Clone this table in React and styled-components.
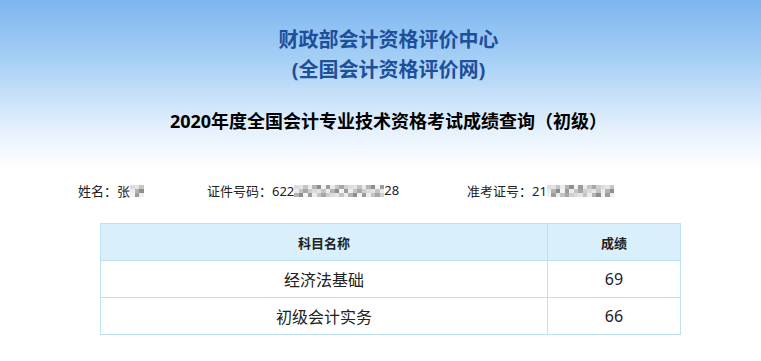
import React from "react";
import styled, { createGlobalStyle } from "styled-components";

const GlobalStyle = createGlobalStyle`
  html, body {
    margin: 0;
    padding: 0;
    background: #fff;
    font-family: "Noto Sans", "Noto Sans CJK SC", sans-serif;
    color: #222;
  }
`;

const Page = styled.div`
  width: 761px;
  height: 361px;
  overflow: hidden;
`;

const Banner = styled.div`
  height: 170px;
  padding: 25px 0 0 16px;
  box-sizing: border-box;
  background: linear-gradient(#7db6f0, #a6cff5 35%, #e3f0fc 75%, #ffffff);
  text-align: center;
`;

const OrgTitle = styled.div`
  font-size: 20px;
  line-height: 30px;
  font-weight: bold;
  color: #1d4f9a;
`;

const ExamTitle = styled.div`
  margin-top: 24px;
  font-size: 18px;
  line-height: 24px;
  font-weight: bold;
  color: #000;
`;

const InfoRow = styled.div`
  display: grid;
  grid-template-columns: 129px 260px auto;
  padding-left: 78px;
  margin-top: 10px;
  height: 20px;
  align-items: center;
  font-size: 13px;
  color: #222;
`;

const InfoItem = styled.div`
  display: flex;
  align-items: center;
  white-space: nowrap;
`;

const Mosaic = styled.span`
  display: inline-grid;
  grid-template-columns: repeat(${(p) => p.$cols}, 4.5px);
  grid-auto-rows: 4px;
  margin-top: 1px;
`;

const Cell = styled.span`
  display: block;
`;

const Table = styled.table`
  margin: 23px 0 0 100px;
  width: 581px;
  border-collapse: collapse;
  table-layout: fixed;
`;

const HeadCell = styled.th`
  height: 36px;
  padding: 0;
  border: 1px solid #bfe1f3;
  background: #d9effb;
  font-size: 13px;
  font-weight: bold;
  color: #222;
  width: ${(p) => p.$width || "auto"};
`;

const BodyCell = styled.td`
  height: 36px;
  padding: 0;
  border: 1px solid #bfe1f3;
  text-align: center;
  font-size: 16px;
  color: #222;
`;

const shades = ["#dcdcdc", "#b4b4b4", "#ececec", "#9c9c9c", "#cfcfcf", "#f3f3f3", "#a8a4b2", "#c4c4c4", "#e4e4e4", "#8e8e8e"];

function Blur({ cols }) {
  const cells = [];
  for (let i = 0; i < cols * 3; i++) {
    cells.push(<Cell key={i} style={{ background: shades[(i * 7 + (i >> 1) + (i % 3)) % shades.length] }} />);
  }
  return <Mosaic $cols={cols}>{cells}</Mosaic>;
}

const scores = [
  { subject: "经济法基础", score: 69 },
  { subject: "初级会计实务", score: 66 },
];

export default function App() {
  return (
    <Page>
      <GlobalStyle />
      <Banner>
        <OrgTitle>财政部会计资格评价中心</OrgTitle>
        <OrgTitle>(全国会计资格评价网)</OrgTitle>
        <ExamTitle>2020年度全国会计专业技术资格考试成绩查询（初级）</ExamTitle>
      </Banner>
      <InfoRow>
        <InfoItem>
          姓名：张<Blur cols={3} />
        </InfoItem>
        <InfoItem>
          证件号码：622<Blur cols={20} />28
        </InfoItem>
        <InfoItem>
          准考证号：21<Blur cols={15} />
        </InfoItem>
      </InfoRow>
      <Table>
        <thead>
          <tr>
            <HeadCell>科目名称</HeadCell>
            <HeadCell $width="132px">成绩</HeadCell>
          </tr>
        </thead>
        <tbody>
          {scores.map((s) => (
            <tr key={s.subject}>
              <BodyCell>{s.subject}</BodyCell>
              <BodyCell>{s.score}</BodyCell>
            </tr>
          ))}
        </tbody>
      </Table>
    </Page>
  );
}
